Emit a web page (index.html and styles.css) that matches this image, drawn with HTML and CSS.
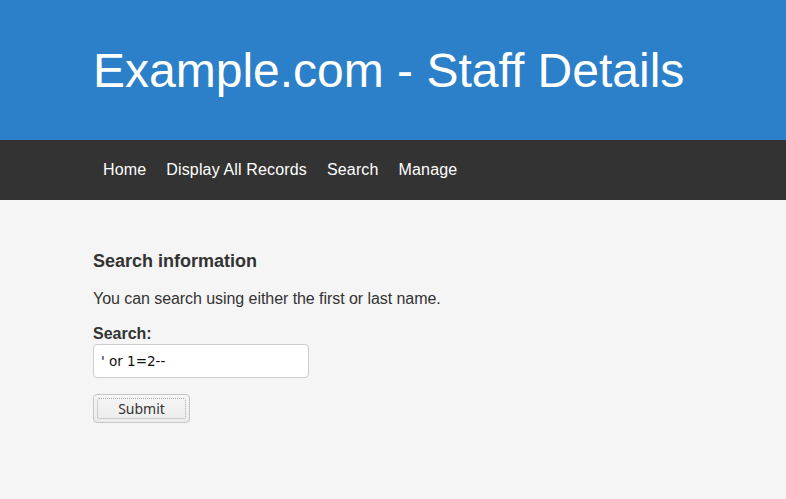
FILE: index.html
```html
<!DOCTYPE html>
<html>
<head>
<meta charset="utf-8">
<link rel="stylesheet" href="styles.css">
</head>
<body>
<header class="banner">
  <div class="wrap"><h1 class="title">Example.com - Staff Details</h1></div>
</header>
<nav class="navbar">
  <div class="nav-links">
    <a href="#">Home</a>
    <a href="#">Display All Records</a>
    <a href="#">Search</a>
    <a href="#">Manage</a>
  </div>
</nav>
<main class="content">
  <div class="wrap">
    <h3 class="section-title">Search information</h3>
    <p class="intro">You can search using either the first or last name.</p>
    <form class="search-form">
      <label class="label" for="q">Search:</label>
      <input class="text-input" id="q" type="text" value="' or 1=2--">
      <button class="submit-btn" type="button"><span class="focus-ring">Submit</span></button>
    </form>
  </div>
</main>
</body>
</html>
```
FILE: styles.css
```css
html, body {
  margin: 0;
  padding: 0;
  height: 100%;
}
body {
  background: #f5f5f5;
  font-family: "Liberation Sans", Arial, sans-serif;
  color: #333;
}
.wrap {
  padding-left: 93px;
}
.banner {
  background: #2c80c9;
  height: 140px;
  display: flex;
  align-items: center;
}
.title {
  margin: 0;
  color: #fff;
  font-weight: normal;
  font-size: 48px;
  line-height: 1;
  padding-top: 1px;
}
.navbar {
  background: #333;
  height: 60px;
  display: flex;
  align-items: center;
}
.nav-links {
  display: flex;
  gap: 20px;
  padding-left: 103px;
}
.nav-links a {
  color: #fff;
  text-decoration: none;
  font-size: 16px;
  letter-spacing: 0.15px;
}
.content {
  padding-top: 50px;
}
.section-title {
  margin: 0;
  font-size: 18px;
  font-weight: bold;
  line-height: 22px;
}
.intro {
  margin: 17px 0 0;
  font-size: 16px;
  line-height: 20px;
  letter-spacing: -0.06px;
}
.search-form {
  display: flex;
  flex-direction: column;
  align-items: flex-start;
  margin-top: 16px;
}
.label {
  font-weight: bold;
  font-size: 16px;
  line-height: 18px;
}
.text-input {
  box-sizing: border-box;
  width: 216px;
  height: 34px;
  margin-top: 1px;
  border: 1px solid #ccc;
  border-radius: 4px;
  background: #fff;
  padding: 0 7px;
  font-family: "DejaVu Sans", sans-serif;
  font-size: 13.5px;
  color: #111;
  outline: none;
}
.submit-btn {
  margin-top: 16px;
  box-sizing: border-box;
  width: 97px;
  height: 29px;
  padding: 3px;
  border: 1px solid #c6c6c6;
  border-radius: 4px;
  background: linear-gradient(#f7f7f7, #ebebeb);
  font-family: "Noto Sans", sans-serif;
  font-size: 14px;
  color: #333;
  display: flex;
}
.focus-ring {
  flex: 1;
  border: 1px dotted #aaa;
  border-radius: 2px;
  display: flex;
  align-items: center;
  justify-content: center;
}
```
